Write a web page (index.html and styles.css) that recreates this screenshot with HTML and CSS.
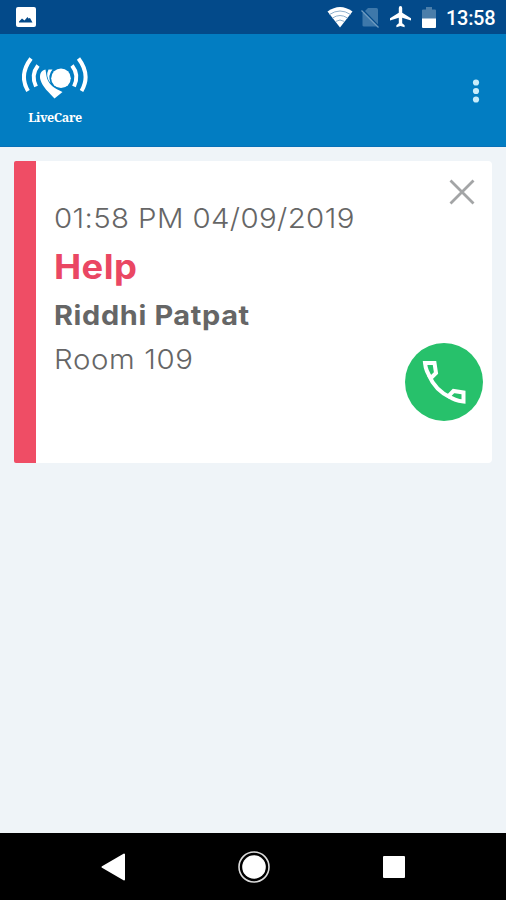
FILE: index.html
```
<!DOCTYPE html>
<html lang="en">
<head>
  <meta charset="utf-8">
  <title>LiveCare</title>
  <meta name="viewport" content="width=device-width, initial-scale=1">
  <link rel="stylesheet" href="styles.css">
</head>
<body>
  <div class="status-bar">
    <svg class="status-picture" width="20" height="20" viewBox="0 0 20 20">
      <rect width="20" height="20" rx="2" fill="#fff"/>
      <path d="M3 15.500V14.500L6 11.500 8.500 13.500 11.500 10 12.500 11.500 14 11 16.500 15.500z" fill="#034a8a"/>
    </svg>
    <svg class="status-icons" width="110" height="34" viewBox="0 0 110 34">
      <path d="M0.500 11.500Q13 2.500 25.500 11.500L13 27.500z" fill="#fff"/>
      <path d="M2.500 14.500Q13 7.500 23.500 14.500M5.500 18Q13 13 20.500 18M8.500 21.500Q13 18.500 17.500 21.500" fill="none" stroke="#8fb0cc" stroke-width="1"/>
      <path d="M41 8h8.500q1.500 0 1.500 1.500v16q0 1-1.500 1H37q-1.500 0-1.500-1V13.500z" fill="#3e78aa"/>
      <path d="M35.500 9.500 52 26.500" stroke="#034a8a" stroke-width="1.500"/>
      <path d="M34.500 10.500 51.500 27.500" stroke="#6f9bc0" stroke-width="1.200"/>
      <path d="M84 20.500v-2.200l-8.800-5.500V8q0-2-1.700-2t-1.700 2v4.800L63 18.300v2.200l8.800-2.700v5.500l-2.400 2v1.900l4.100-1.200 4.100 1.200v-1.900l-2.400-2v-5.500z" fill="#fff"/>
      <path d="M99 7h6v2.500h3q1 0 1 1V19H95v-8.500q0-1 1-1h3z" fill="#4b7eaa"/>
      <path d="M95 18.500h14V27q0 1-1 1H96q-1 0-1-1z" fill="#fff"/>
    </svg>
    <span class="clock">13:58</span>
  </div>

  <header class="app-bar">
    <div class="logo">
      <svg width="66" height="44" viewBox="0 0 66 44">
        <g fill="none" stroke="#fff" stroke-width="4">
          <path d="M9 2.500Q-3.500 19 6 35"/>
          <path d="M16 9.500Q8.500 19 14 30.500"/>
          <path d="M56.500 2.500Q69 19 59.500 35"/>
          <path d="M50 9.500Q57.500 19 52 30.500"/>
        </g>
        <circle cx="39" cy="22.300" r="9.800" fill="#fff"/>
        <path d="M23.500 13.500C19 14 17 19 18.500 24c2 7 8.500 12.500 14 18.500L40.500 36 34.500 33C29 30 25.500 25.500 24.500 20z" fill="#fff"/>
        <path d="M26.500 13.500H30.500Q25.500 19 28.500 27 23 20 26.500 13.500z" fill="#fff"/>
      </svg>
      <span class="logo-name">LiveCare</span>
    </div>
    <svg class="menu" width="8" height="26" viewBox="0 0 8 26" fill="#c8ecfa">
      <circle cx="4" cy="4.500" r="3.100"/>
      <circle cx="4" cy="13" r="3.100"/>
      <circle cx="4" cy="21.500" r="3.100"/>
    </svg>
  </header>

  <main class="alerts">
    <article class="alert">
      <div class="details">
        <div class="time">01:58 PM 04/09/2019</div>
        <div class="type">Help</div>
        <div class="name">Riddhi Patpat</div>
        <div class="room">Room 109</div>
      </div>
      <div class="actions">
        <svg class="close" width="26" height="26" viewBox="0 0 26 26">
          <path d="M1.500 1.500l23 23M24.500 1.500l-23 23" stroke="#a3a5a6" stroke-width="2.800"/>
        </svg>
        <div class="call">
          <svg width="44" height="44" viewBox="0 0 44 44" fill="none" stroke="#fff" stroke-width="4">
            <path d="M3 3H12.500L14 13 9 18C5 13 3.500 8 3 3z"/>
            <path d="M41.500 41.500V32.500L31.500 31 26.500 36C31.500 40 37 41 41.500 41.500z"/>
            <path d="M7 15.500C11 25 19 33 28.500 37.500"/>
          </svg>
        </div>
      </div>
    </article>
  </main>

  <nav class="nav-bar">
    <svg width="26" height="30" viewBox="0 0 26 30">
      <path d="M24 2.500v25L2.500 15z" fill="#fff" stroke="#fff" stroke-width="2" stroke-linejoin="round"/>
    </svg>
    <svg class="home" width="34" height="34" viewBox="0 0 34 34">
      <circle cx="17" cy="17" r="15" fill="none" stroke="#ddd" stroke-width="1.600"/>
      <circle cx="17" cy="17" r="11.800" fill="#fff"/>
    </svg>
    <svg width="22" height="22" viewBox="0 0 22 22">
      <rect width="22" height="22" rx="1" fill="#fff"/>
    </svg>
  </nav>
</body>
</html>
```
FILE: styles.css
```
* {
  box-sizing: border-box;
}

html,
body {
  margin: 0;
  height: 100%;
}

body {
  display: flex;
  flex-direction: column;
  background: #eff4f8;
  font-family: Inter, sans-serif;
  overflow: hidden;
}

svg {
  display: block;
  flex: none;
}

.status-bar {
  display: flex;
  align-items: center;
  height: 34px;
  padding: 0 11px 0 16px;
  background: #034a8a;
  color: #fff;
}

.status-icons {
  margin-left: auto;
}

.clock {
  width: 49px;
  margin: 2px 0 0 9px;
  font: 500 20px/24px Roboto, sans-serif;
  letter-spacing: -0.3px;
  white-space: nowrap;
}

.app-bar {
  display: flex;
  justify-content: space-between;
  height: 113px;
  padding: 22px 26px 0 22px;
  background: #027dc2;
  border-bottom: 1px solid #0871b8;
}

.logo {
  display: flex;
  flex-direction: column;
  align-items: center;
}

.logo-name {
  margin-top: 10px;
  font: bold 12.5px/16px "Noto Serif", "DejaVu Serif", serif;
  letter-spacing: -0.4px;
  color: #fff;
}

.menu {
  margin-top: 22px;
}

.alerts {
  flex: 1;
  padding: 14px 14px 0;
}

.alert {
  display: flex;
  justify-content: space-between;
  height: 302px;
  padding-left: 18px;
  background: #fff;
  border-left: 22px solid #ef4d65;
  border-radius: 2px 4px 4px 2px;
}

/* slightly extended letterforms */
.details {
  padding-top: 39px;
  color: #666;
  white-space: nowrap;
  transform: scaleX(1.07);
  transform-origin: left;
}

.time {
  font-size: 27.5px;
  font-weight: 300;
  line-height: 36px;
  letter-spacing: 0.35px;
}

.type {
  margin-top: 10px;
  font-size: 34px;
  font-weight: 700;
  line-height: 42px;
  letter-spacing: 0.4px;
  color: #ea4763;
}

.name {
  margin-top: 10px;
  font-size: 27px;
  font-weight: 700;
  line-height: 36px;
  letter-spacing: 0.6px;
}

.room {
  margin-top: 7px;
  font-size: 27.5px;
  font-weight: 300;
  line-height: 36px;
  letter-spacing: 0.6px;
}

.actions {
  display: flex;
  flex-direction: column;
  align-items: flex-end;
  padding: 18px 9px 0 0;
}

.close {
  margin-right: 8px;
}

.call {
  display: flex;
  align-items: center;
  justify-content: center;
  width: 78px;
  height: 78px;
  margin-top: 138px;
  background: #27c16b;
  border-radius: 50%;
}

.nav-bar {
  display: flex;
  align-items: center;
  justify-content: space-between;
  height: 67px;
  padding: 0 101px 0 100px;
  background: #000;
}

.home {
  margin-right: 2px;
}
```
